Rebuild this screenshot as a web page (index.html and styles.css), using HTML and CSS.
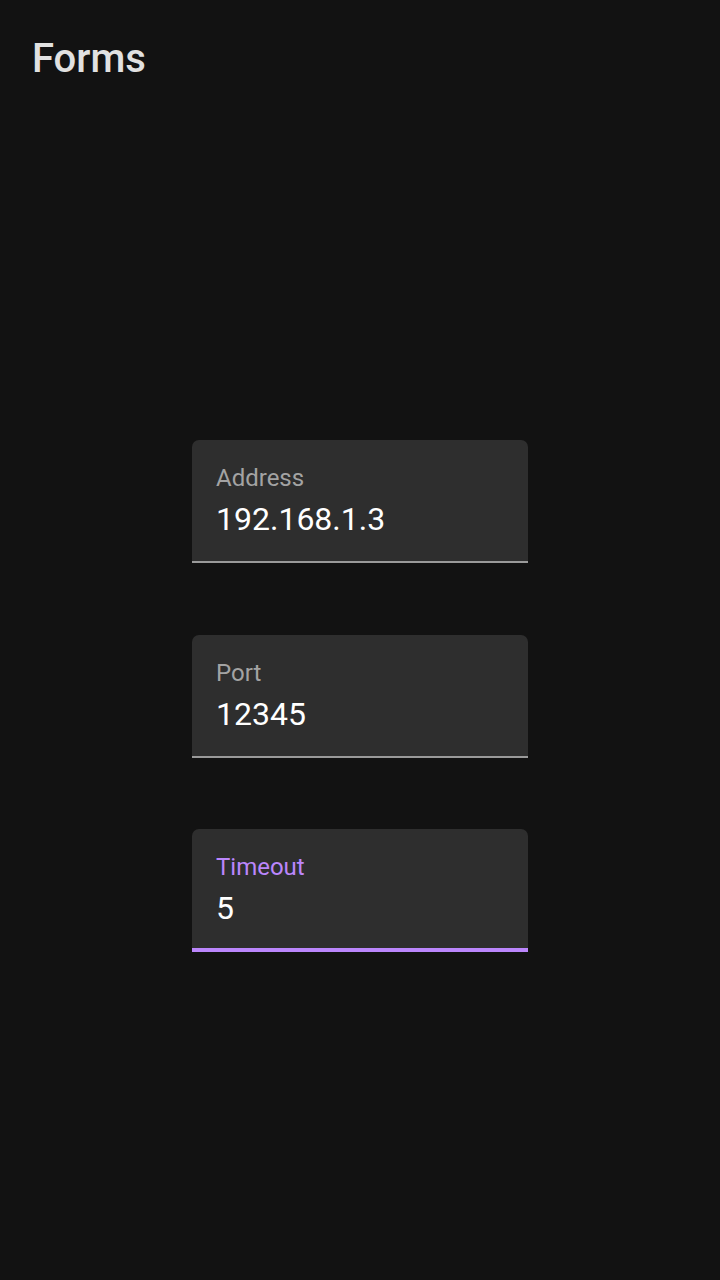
FILE: index.html
```html
<!DOCTYPE html>
<html lang="en">
<head>
<meta charset="utf-8">
<title>Forms</title>
<link rel="stylesheet" href="styles.css">
</head>
<body>
<div class="app">
  <header class="header">
    <h1 class="title">Forms</h1>
  </header>
  <main class="content">
    <div class="field">
      <label class="field-label">Address</label>
      <div class="field-value">192.168.1.3</div>
    </div>
    <div class="field">
      <label class="field-label">Port</label>
      <div class="field-value">12345</div>
    </div>
    <div class="field field-focused">
      <label class="field-label">Timeout</label>
      <div class="field-value">5</div>
    </div>
  </main>
</div>
</body>
</html>
```

FILE: styles.css
```css
* { box-sizing: border-box; }

html, body {
  margin: 0;
  padding: 0;
  background: #121212;
  font-family: Roboto, "Noto Sans", "Liberation Sans", sans-serif;
}

.app {
  width: 720px;
  height: 1280px;
  display: flex;
  flex-direction: column;
}

.header {
  height: 112px;
  padding: 35px 32px 0;
  flex: none;
}

.title {
  margin: 0;
  font-size: 40px;
  line-height: 48px;
  font-weight: 500;
  color: #e1e1e1;
}

.content {
  flex: 1;
  display: flex;
  flex-direction: column;
  align-items: center;
  justify-content: center;
  gap: 71.5px;
}

.field {
  width: 336px;
  height: 123px;
  background: #2e2e2e;
  border-radius: 7px 7px 0 0;
  border-bottom: 2px solid #9a9a9a;
  padding: 24px 24px 0;
  display: flex;
  flex-direction: column;
  gap: 8px;
}

.field-label {
  font-size: 24px;
  line-height: 28px;
  color: #a3a3a3;
}

.field-value {
  font-size: 32px;
  line-height: 38px;
  color: #ffffff;
}

.field-focused {
  border-bottom: 4px solid #bb86fc;
}

.field-focused .field-label {
  color: #bb86fc;
}
```
